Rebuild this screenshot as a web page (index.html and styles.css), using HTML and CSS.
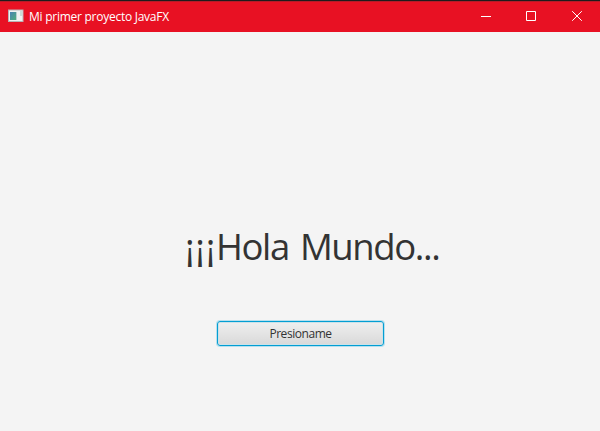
FILE: index.html
```html
<!DOCTYPE html>
<html lang="es">
<head>
<meta charset="utf-8">
<title>Mi primer proyecto JavaFX</title>
<link rel="stylesheet" href="styles.css">
</head>
<body>
<div class="window">
  <header class="titlebar">
    <svg class="app-icon" width="16" height="14" viewBox="0 0 16 14">
      <defs><linearGradient id="pane" x1="0" y1="0" x2="1" y2="1"><stop offset="0" stop-color="#4b82b4"/><stop offset="1" stop-color="#4fae7c"/></linearGradient></defs>
      <rect x=".5" y="1" width="14.5" height="11.5" fill="#f0f2f2" stroke="#b9b3b5"/>
      <rect x="2" y="3" width="6" height="8" fill="url(#pane)"/>
      <rect x="8" y="3" width="1" height="8" fill="#b9cfd0"/>
      <rect x="12" y="2" width="2" height="5" fill="#cbdcd8"/>
    </svg>
    <span class="title">Mi primer proyecto JavaFX</span>
    <div class="controls">
      <svg width="10" height="10" viewBox="0 0 10 10"><path d="M0 5.5H10"/></svg>
      <svg width="10" height="10" viewBox="0 0 10 10"><path d="M.5.5H9.5V9.5H.5Z"/></svg>
      <svg width="10" height="10" viewBox="0 0 10 10"><path d="M.2.2L9.8 9.8M9.8.2L.2 9.8"/></svg>
    </div>
  </header>
  <main class="content">
    <h1 class="greeting"><span class="marks">¡¡¡</span>Hola Mundo...</h1>
    <button class="press" type="button">Presioname</button>
  </main>
</div>
</body>
</html>
```

FILE: styles.css
```css
* { box-sizing: border-box; }
body { margin: 0; font-family: "Open Sans", "Noto Sans", sans-serif; }
.window { width: 600px; height: 431px; background: #f4f4f4; overflow: hidden; }
.titlebar {
  display: flex;
  align-items: center;
  height: 32px;
  padding: 0 18px 1px 8px;
  background: #e81123;
  border-top: 1px solid #1f1b1c;
  box-shadow: inset 0 1px #b51c28;
  color: #fff;
}
.app-icon { margin-right: 5px; }
.title { margin-top: 2px; font-size: 12px; line-height: 16px; letter-spacing: -0.26px; white-space: nowrap; }
.controls { display: flex; margin-left: auto; }
.controls svg { display: block; fill: none; stroke: #fff; stroke-width: 1; }
.controls svg:nth-child(2) { margin: 0 36px 0 35px; }
.content { display: flex; flex-direction: column; align-items: flex-start; padding: 189px 0 0 185px; }
.greeting {
  margin: 0;
  font-size: 36.5px;
  font-weight: 400;
  line-height: 50px;
  letter-spacing: -1.4px;
  word-spacing: 3px;
  color: #333;
  white-space: nowrap;
}
.marks { letter-spacing: 0.7px; }
.press {
  width: 167px;
  height: 25px;
  margin: 50px 0 0 32px;
  padding: 0;
  border: 1px solid #039ed3;
  border-radius: 3px;
  background: linear-gradient(#efefef, #d9d9d9);
  box-shadow: 0 0 0 1px #b7e0ee, inset 0 0 0 1px #cce2e9;
  color: #333;
  font: 12px/20px "Open Sans", "Noto Sans", sans-serif;
  letter-spacing: -0.45px;
}
```
